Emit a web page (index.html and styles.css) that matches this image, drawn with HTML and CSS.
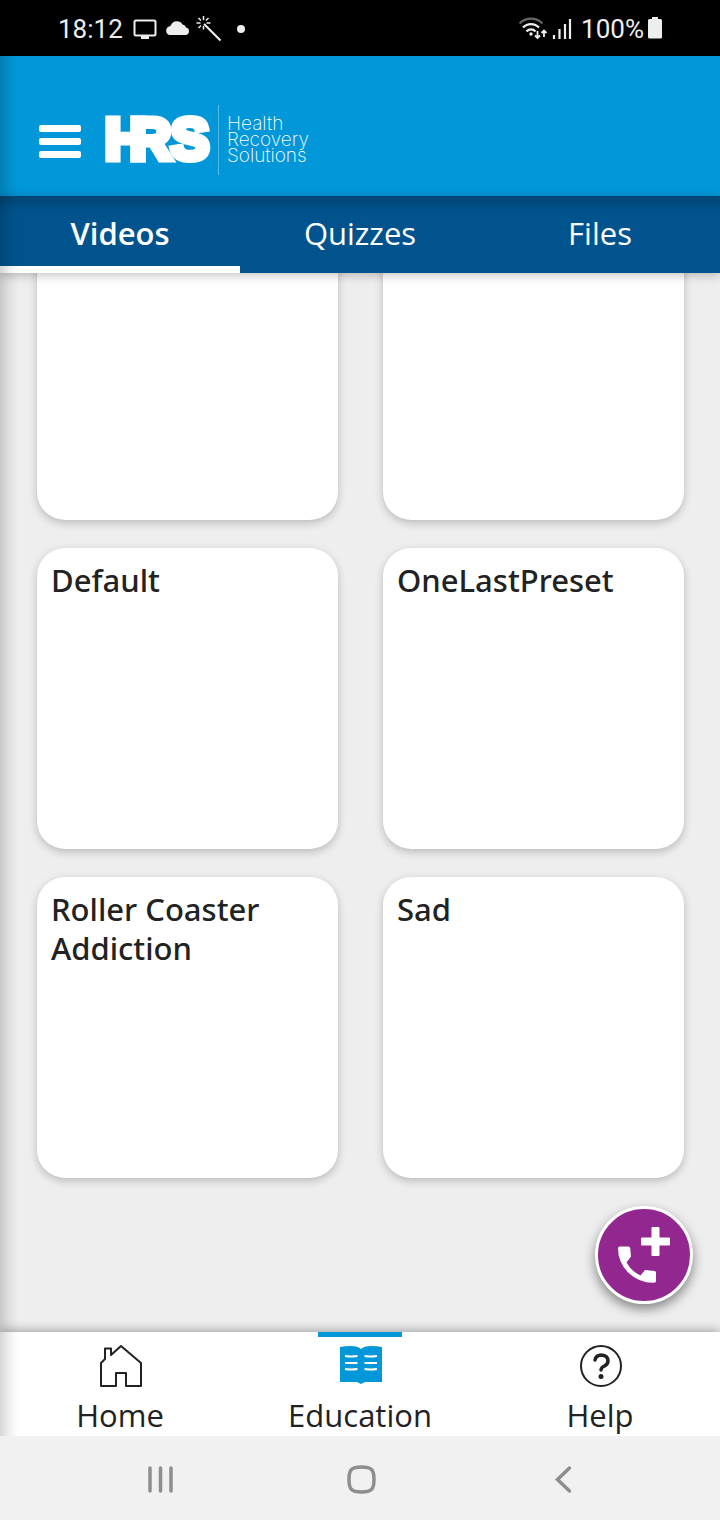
FILE: index.html
```html
<!DOCTYPE html>
<html lang="en">
<head>
<meta charset="utf-8">
<meta name="viewport" content="width=device-width, initial-scale=1">
<title>Education</title>
<link rel="stylesheet" href="styles.css">
</head>
<body>
<div class="status">
  <div class="status-group">
    <span>18:12</span>
    <svg class="notices" width="116" height="32" viewBox="132 12 116 32" aria-hidden="true">
      <rect x="134.500" y="19.500" width="21" height="15" rx="1.500" fill="none" stroke="#eee" stroke-width="2"/>
      <path d="M141 35h8v3h-8z" fill="#eee"/>
      <path d="M169.500 34a4.500 4.500 0 0 1-.5-8.500q1.500-.5 2-1.500a6.500 6.500 0 0 1 11.500-.5q3 .5 3.500 3a3.800 3.800 0 0 1-.5 7.500z" fill="#eee"/>
      <path d="M204 23l16.500 16.500" stroke="#eee" stroke-width="2.200"/>
      <path d="M203.500 15v4M203.500 25v3.500M196.500 22h4M206.500 22h4M198.500 17l2.500 2.500M208.500 17l-2.500 2.500M198.500 27l2.500-2.500" stroke="#eee" stroke-width="1.500"/>
      <circle cx="241" cy="28" r="4" fill="#eee"/>
    </svg>
  </div>
  <div class="status-group">
    <svg width="54" height="32" viewBox="519 12 54 32" fill="none" stroke="#eee" aria-hidden="true">
      <path d="M519.500 22.500a16 16 0 0 1 23 0" stroke="#666" stroke-width="2.200"/>
      <path d="M523 26.500a11 11 0 0 1 16 0M526.500 30.500a6 6 0 0 1 9 0" stroke-width="2.200"/>
      <circle cx="531" cy="33" r="1.700" fill="#eee" stroke="none"/>
      <path d="M537.500 30v6.500M535 34.500l2.500 2.500 2.500-2.500M544 36v-6M541.500 32l2.500-2.500 2.500 2.500" stroke-width="1.800"/>
      <path d="M554 34v4M559.500 28v10M565 23v15M570 18v20" stroke-width="2.200"/>
    </svg>
    <span class="battery-level">100%</span>
    <svg width="14" height="32" viewBox="648 13 14 32" aria-hidden="true">
      <path d="M652 17h6v2h2.500q1.500 0 1.500 1.500v16.500q0 1.500-1.500 1.500h-11q-1.500 0-1.500-1.500v-16.500q0-1.500 1.500-1.500h2.500z" fill="#eee"/>
    </svg>
  </div>
</div>

<div class="app">
  <header class="header">
    <button class="menu" aria-label="Menu"><span></span><span></span><span></span></button>
    <div class="logo">
      <svg width="108" height="70" viewBox="0 0 108 70" aria-label="HRS">
        <text class="logo-mark" x="0 25 66" y="54">HRS</text>
      </svg>
      <div class="logo-name">Health<br>Recovery<br>Solutions</div>
    </div>
  </header>

  <nav class="tabs">
    <button class="tab tab-active">Videos</button>
    <button class="tab">Quizzes</button>
    <button class="tab">Files</button>
  </nav>

  <main class="content">
    <div class="grid">
      <section class="card"></section>
      <section class="card"></section>
      <section class="card"><h2>Default</h2></section>
      <section class="card"><h2>OneLastPreset</h2></section>
      <section class="card"><h2>Roller Coaster Addiction</h2></section>
      <section class="card"><h2>Sad</h2></section>
    </div>
    <button class="call" aria-label="New call">
      <svg width="92" height="92" viewBox="598 1209 92 92" fill="#fff" aria-hidden="true">
        <rect x="651.500" y="1227" width="8" height="29" rx="1"/>
        <rect x="641" y="1237.500" width="29" height="8" rx="1"/>
        <path d="M620 1246.500h8.500q1.500 0 1.700 1.500l.8 8.500-4.500 6q4.500 8.500 14 13l4.500-5.500 9.500 1q1.500.2 1.500 1.500v8.500q0 1.800-2 1.800-15 .2-25-9.500-11-10.500-11-25 0-1.800 2-1.800z"/>
      </svg>
    </button>
  </main>

  <nav class="bottom">
    <a class="item" href="#home">
      <svg width="44" height="44" viewBox="98 1344 44 44" fill="none" stroke="#222" stroke-width="2" stroke-linejoin="round" aria-hidden="true">
        <path d="M101 1386v-23l4-4v-10.500h6v6.500l10-9 20 17v23h-15v-13h-10v13z"/>
      </svg>
      <span>Home</span>
    </a>
    <a class="item item-active" href="#education" aria-current="page">
      <svg width="44" height="44" viewBox="338 1344 44 44" aria-hidden="true">
        <path d="M340 1347q5-1 11-1 7 0 10 3 3-3 10-3 6 0 11 1v35h-17l-4 2-4-2h-17z" fill="#0297d8"/>
        <path d="M345 1356q6 1 12.500 0M345 1363h12.500M345 1369q6 1 12.500 0M364.500 1356q6 1 12.500 0M364.500 1363h12.500M364.500 1369q6 1 12.500 0" fill="none" stroke="#fff" stroke-width="2"/>
      </svg>
      <span>Education</span>
    </a>
    <a class="item" href="#help">
      <svg width="44" height="44" viewBox="578 1344 44 44" fill="none" stroke="#222" aria-hidden="true">
        <circle cx="601" cy="1366" r="20" stroke-width="2"/>
        <path d="M595 1360q1-5 6.500-5 6.500.5 6.500 6 0 3-3.500 5-3.500 1.500-3.500 4" stroke-width="3.500" stroke-linecap="round"/>
        <circle cx="601" cy="1376.500" r="2.500" fill="#222" stroke="none"/>
      </svg>
      <span>Help</span>
    </a>
  </nav>
</div>

<div class="system">
  <button aria-label="Recent apps"><svg width="32" height="32" viewBox="144 1463 32 32"><path d="M150 1468v23M160.500 1468v23M171 1468v23"/></svg></button>
  <button aria-label="Home screen"><svg width="32" height="32" viewBox="346 1463 32 32"><path d="M361.500 1467c10 0 12.500 2.500 12.500 12.500s-2.500 12.500-12.500 12.500-12.500-2.500-12.500-12.500 2.500-12.500 12.500-12.500z"/></svg></button>
  <button aria-label="Back"><svg width="32" height="32" viewBox="547 1463 32 32"><path d="M569.500 1468l-12 11.500 12 11.500"/></svg></button>
</div>
</body>
</html>
```
FILE: styles.css
```css
* {
  box-sizing: border-box;
}

body {
  margin: 0;
  height: 100vh;
  display: flex;
  flex-direction: column;
  font-family: "Open Sans", "Noto Sans", sans-serif;
  font-size: 31px;
  color: #222;
  background: #eee;
}

button {
  border: 0;
  padding: 0;
  background: none;
  font: inherit;
  color: inherit;
}

svg {
  display: block;
}

.status {
  display: flex;
  justify-content: space-between;
  height: 56px;
  padding: 1px 58px 0;
  background: #000;
  color: #eee;
  font-family: Roboto, sans-serif;
  font-size: 26px;
}

.status-group {
  display: flex;
  align-items: center;
  gap: 8px;
}

.notices {
  margin-left: 1px;
}

.battery-level {
  margin-right: -4px;
}

.app {
  position: relative;
  flex: 1;
  min-height: 0;
  display: flex;
  flex-direction: column;
}

.app::after {
  content: "";
  position: absolute;
  inset: 0 auto 0 0;
  width: 18px;
  background: linear-gradient(90deg, rgba(0, 0, 0, .16), rgba(0, 0, 0, .07) 45%, transparent);
  pointer-events: none;
  z-index: 2;
}

.header {
  display: flex;
  align-items: center;
  gap: 24px;
  padding: 49px 39px 21px;
  background: #0297d8;
  color: #fff;
}

.menu {
  display: grid;
  gap: 6px;
  width: 42px;
  padding-top: 2px;
}

.menu span {
  height: 7px;
  border-radius: 2px;
  background: #fff;
}

.logo {
  display: flex;
  align-items: center;
  gap: 5px;
}

.logo svg {
  overflow: visible;
}

.logo-mark {
  font: 700 57px "Liberation Sans", sans-serif;
  fill: #fff;
  stroke: #fff;
  stroke-width: 7;
}

.logo-name {
  border-left: 1px solid #55b9e5;
  padding: 11px 8px;
  font: 200 19px/16px Inter, sans-serif;
}

.tabs {
  display: flex;
  position: relative;
  background: linear-gradient(#014573, #01538e 16px);
  color: #fff;
  box-shadow: 0 2px 10px rgba(0, 0, 0, .25);
  z-index: 1;
}

.tab {
  flex: 1;
  height: 77px;
  border-bottom: 7px solid transparent;
  padding-top: 4px;
}

.tab-active {
  border-bottom-color: #fff;
  font-weight: 600;
}

.content {
  position: relative;
  flex: 1;
  min-height: 0;
  overflow: hidden;
  display: flex;
  flex-direction: column;
  justify-content: flex-end;
  padding: 0 36px 154px 37px;
}

.grid {
  display: grid;
  grid-template-columns: 1fr 1fr;
  gap: 28px 45px;
}

.card {
  aspect-ratio: 1;
  padding: 13px 14px;
  border-radius: 28px;
  background: #fff;
  box-shadow: 0 3px 8px rgba(0, 0, 0, .22);
}

.card h2 {
  margin: 0;
  font: 500 31px/39px "Noto Sans", "Open Sans", sans-serif;
}

.call {
  position: absolute;
  right: 27px;
  bottom: 28px;
  border: 3px solid #fff;
  border-radius: 50%;
  background: #92278f;
  box-shadow: 0 5px 12px rgba(0, 0, 0, .45);
}

.bottom {
  display: flex;
  position: relative;
  background: #fff;
  box-shadow: 0 -2px 10px rgba(0, 0, 0, .3);
}

.item {
  position: relative;
  flex: 1;
  height: 104px;
  display: flex;
  flex-direction: column;
  align-items: center;
  gap: 7px;
  padding-top: 12px;
  line-height: 40px;
  color: inherit;
  text-decoration: none;
}

.item-active::before {
  content: "";
  position: absolute;
  top: 0;
  width: 84px;
  height: 5px;
  background: #0297d8;
}

.system {
  position: relative;
  z-index: 3;
  display: flex;
  justify-content: space-between;
  align-items: center;
  height: 84px;
  padding: 1px 141px 0 144px;
  background: #f1f1f1;
}

.system path {
  fill: none;
  stroke: #8e8e8e;
  stroke-width: 3.500;
  stroke-linecap: round;
}
```
